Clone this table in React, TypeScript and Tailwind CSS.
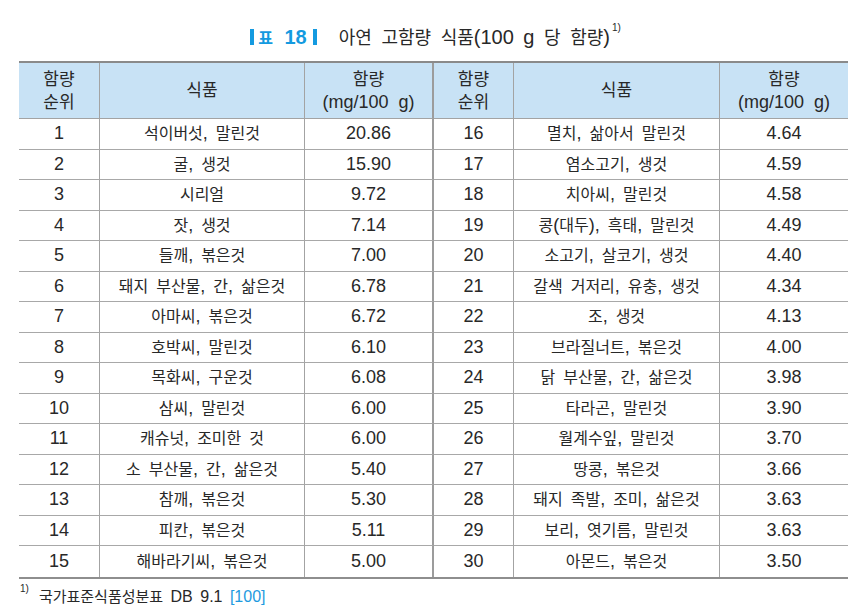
import React from "react";

const rows: [string, string, string, string, string, string][] = [
  ["1", "석이버섯, 말린것", "20.86", "16", "멸치, 삶아서 말린것", "4.64"],
  ["2", "굴, 생것", "15.90", "17", "염소고기, 생것", "4.59"],
  ["3", "시리얼", "9.72", "18", "치아씨, 말린것", "4.58"],
  ["4", "잣, 생것", "7.14", "19", "콩(대두), 흑태, 말린것", "4.49"],
  ["5", "들깨, 볶은것", "7.00", "20", "소고기, 살코기, 생것", "4.40"],
  ["6", "돼지 부산물, 간, 삶은것", "6.78", "21", "갈색 거저리, 유충, 생것", "4.34"],
  ["7", "아마씨, 볶은것", "6.72", "22", "조, 생것", "4.13"],
  ["8", "호박씨, 말린것", "6.10", "23", "브라질너트, 볶은것", "4.00"],
  ["9", "목화씨, 구운것", "6.08", "24", "닭 부산물, 간, 삶은것", "3.98"],
  ["10", "삼씨, 말린것", "6.00", "25", "타라곤, 말린것", "3.90"],
  ["11", "캐슈넛, 조미한 것", "6.00", "26", "월계수잎, 말린것", "3.70"],
  ["12", "소 부산물, 간, 삶은것", "5.40", "27", "땅콩, 볶은것", "3.66"],
  ["13", "참깨, 볶은것", "5.30", "28", "돼지 족발, 조미, 삶은것", "3.63"],
  ["14", "피칸, 볶은것", "5.11", "29", "보리, 엿기름, 말린것", "3.63"],
  ["15", "해바라기씨, 볶은것", "5.00", "30", "아몬드, 볶은것", "3.50"],
];

const cols = "grid grid-cols-[81px_205px_129px_80px_206px_128px]";

// 한글은 조금 작게, 라틴 문자는 크게 (원본 문서의 혼합 글꼴 느낌)
function Mixed({ t, ko = "text-[16px]" }: { t: string; ko?: string }) {
  const parts = t.split(/([\uAC00-\uD7A3]+)/);
  return (
    <>
      {parts.map((p, i) =>
        /[\uAC00-\uD7A3]/.test(p) ? (
          <span key={i} className={ko}>
            {p}
          </span>
        ) : (
          <React.Fragment key={i}>{p}</React.Fragment>
        )
      )}
    </>
  );
}

function borderFor(i: number) {
  if (i === 5) return "";
  if (i === 2) return "border-r-2 border-r-[#9c9c9c]";
  return "border-r border-r-[#a3a3a3]";
}

function HeaderCell({ i, children }: { i: number; children: React.ReactNode }) {
  return (
    <div
      className={`h-[56px] flex flex-col items-center justify-center leading-[23px] bg-[#c8e2f5] border-b border-b-[#a3a3a3] ${borderFor(i)}`}
    >
      {children}
    </div>
  );
}

export default function App() {
  return (
    <div
      className="w-[867px] h-[613px] bg-white text-[#282828] text-[18px]"
      style={{ fontFamily: '"Liberation Sans", "Noto Sans CJK KR", sans-serif' }}
    >
      {/* 제목 */}
      <div className="h-[61px] pt-[24px] flex justify-center">
        <div className="flex items-center h-[26px] pl-[4px]">
          <span className="w-[4px] h-[16px] bg-[#149ae0]" />
          <span className="ml-[4px] text-[20px] font-bold text-[#149ae0] [word-spacing:6px]">
            <Mixed t="표 18" ko="text-[16px]" />
          </span>
          <span className="ml-[6px] w-[4px] h-[16px] bg-[#149ae0]" />
          <span className="ml-[22px] text-[20px] [word-spacing:4px]">
            <Mixed t="아연 고함량 식품(100 g 당 함량)" ko="text-[18px]" />
          </span>
          <sup className="text-[10px] ml-[2px] -mt-[8px]">1)</sup>
        </div>
      </div>

      {/* 표 */}
      <div className={`${cols} ml-[19px] w-[829px] border-t-2 border-t-[#8a8a8a] border-b-2 border-b-[#8e8e8e]`}>
        <HeaderCell i={0}>
          <Mixed t="함량" ko="text-[17px]" />
          <Mixed t="순위" ko="text-[17px]" />
        </HeaderCell>
        <HeaderCell i={1}>
          <Mixed t="식품" ko="text-[17px]" />
        </HeaderCell>
        <HeaderCell i={2}>
          <Mixed t="함량" ko="text-[17px]" />
          <span className="[word-spacing:5px]">(mg/100 g)</span>
        </HeaderCell>
        <HeaderCell i={3}>
          <Mixed t="함량" ko="text-[17px]" />
          <Mixed t="순위" ko="text-[17px]" />
        </HeaderCell>
        <HeaderCell i={4}>
          <Mixed t="식품" ko="text-[17px]" />
        </HeaderCell>
        <HeaderCell i={5}>
          <Mixed t="함량" ko="text-[17px]" />
          <span className="[word-spacing:5px]">(mg/100 g)</span>
        </HeaderCell>

        {rows.map((r, ri) =>
          r.map((v, ci) => (
            <div
              key={`${ri}-${ci}`}
              className={`h-[30.5px] flex items-center justify-center whitespace-pre [word-spacing:3px] ${
                ri < rows.length - 1 ? "border-b border-b-[#a8a8a8]" : ""
              } ${borderFor(ci)}`}
            >
              <span>
                <Mixed t={v} />
              </span>
            </div>
          ))
        )}
      </div>

      {/* 각주 */}
      <div className="ml-[20px] mt-[4px] flex items-start text-[16px] leading-[20px]">
        <span className="text-[10px] leading-[12px]">1)</span>
        <span className="ml-[10px] mt-[4px] [word-spacing:3px]">
          <Mixed t="국가표준식품성분표 DB 9.1 " ko="text-[15px]" />
          <span className="text-[#1e9ae0]">[100]</span>
        </span>
      </div>
    </div>
  );
}
